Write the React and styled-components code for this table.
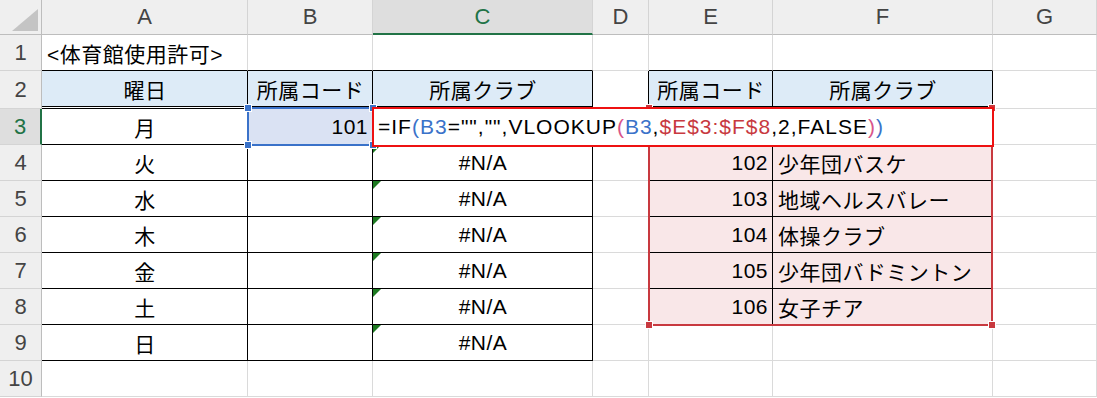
import React from 'react';
import styled, { createGlobalStyle } from 'styled-components';

const Global = createGlobalStyle`
  html, body { margin: 0; padding: 0; background: #fff; }
  body { font-family: "Liberation Sans", "Noto Sans CJK JP", sans-serif; }
`;

const GRID = '#DADADA';
const BLACK = '#000';

const Sheet = styled.div`
  display: grid;
  grid-template-columns: 42px 206px 125px 220px 56px 124px 220px 104px;
  grid-template-rows: 35px 36px 38px repeat(8, 36px);
  width: 1097px;
  height: 398px;
  overflow: hidden;
  background: #fff;
  font-family: "Liberation Sans", "Noto Sans CJK JP", sans-serif;
`;

const Corner = styled.div`
  grid-row: 1;
  grid-column: 1;
  background: #efefef;
  border-right: 1px solid #bdbdbd;
  border-bottom: 1px solid #bdbdbd;
  box-sizing: border-box;
  display: flex;
  align-items: flex-end;
  justify-content: flex-end;
  padding: 0 3px 3px 0;
`;

const ColHead = styled.div`
  grid-row: 1;
  grid-column: ${p => p.$c};
  box-sizing: border-box;
  background: ${p => (p.$active ? '#dedede' : '#efefef')};
  border-right: 1px solid #d4d4d4;
  border-bottom: ${p => (p.$active ? '2px solid #217346' : '1px solid #bdbdbd')};
  color: ${p => (p.$active ? '#217346' : '#444')};
  font-size: 22px;
  display: flex;
  align-items: center;
  justify-content: center;
`;

const RowHead = styled.div`
  grid-row: ${p => p.$r};
  grid-column: 1;
  box-sizing: border-box;
  background: ${p => (p.$active ? '#dedede' : '#efefef')};
  border-right: ${p => (p.$active ? '2px solid #217346' : '1px solid #bdbdbd')};
  border-bottom: 1px solid #d4d4d4;
  color: ${p => (p.$active ? '#217346' : '#444')};
  font-size: 22px;
  display: flex;
  align-items: center;
  justify-content: center;
`;

const Cell = styled.div`
  grid-row: ${p => p.$r};
  grid-column: ${p => p.$c};
  box-sizing: border-box;
  position: relative;
  background: ${p => p.$bg || '#fff'};
  border-right: 1px solid ${p => p.$rb || GRID};
  border-bottom: ${p => (p.$bb === 'double' ? '3px double #000' : `1px solid ${p.$bb || GRID}`)};
  display: flex;
  align-items: center;
  justify-content: ${p => (p.$align === 'right' ? 'flex-end' : p.$align === 'center' ? 'center' : 'flex-start')};
  padding: 0 4px 0 5px;
  font-size: 21px;
  letter-spacing: 0.5px;
  color: #000;
  white-space: nowrap;
  overflow: visible;
  z-index: ${p => (p.$front ? 1 : 0)};
  background-clip: padding-box;

  &::before {
    content: '';
    display: ${p => (p.$err ? 'block' : 'none')};
    position: absolute;
    top: 0;
    left: 0;
    width: 0;
    height: 0;
    border-top: 8px solid #1d7a21;
    border-right: 8px solid transparent;
  }
`;

const RefBox = styled.div`
  grid-row: ${p => p.$r};
  grid-column: ${p => p.$c};
  position: relative;
  border: 2px solid ${p => p.$color};
  margin: ${p => p.$m};
  pointer-events: none;
  z-index: ${p => p.$z};
`;

const Handle = styled.span`
  position: absolute;
  width: 6px;
  height: 6px;
  background: ${p => p.$color};
  border: 1px solid #fff;
  ${p => (p.$v === 't' ? 'top: -5px;' : 'bottom: -5px;')}
  ${p => (p.$h === 'l' ? 'left: -5px;' : 'right: -5px;')}
`;

const EditBox = styled.div`
  grid-row: 4;
  grid-column: 4 / 8;
  margin: -2px -1px -2px -1px;
  border: 2px solid #ee1111;
  background: #fff;
  z-index: 3;
  display: flex;
  align-items: center;
  padding-left: 4px;
  font-size: 21px;
  letter-spacing: 1px;
  color: #000;
  white-space: nowrap;
`;

const Tok = styled.span`
  color: ${p => p.$color || '#000'};
`;

const BLUE = '#3a72c9';
const RED = '#c8393f';
const PINK = '#d9558a';
const RANGE_FILL = '#f9e7e8';
const HEAD_FILL = '#ddebf7';

const days = ['月', '火', '水', '木', '金', '土', '日'];
const clubs = [
  ['102', '少年団バスケ'],
  ['103', '地域ヘルスバレー'],
  ['104', '体操クラブ'],
  ['105', '少年団バドミントン'],
  ['106', '女子チア'],
];

function buildCells() {
  const cells = [];
  for (let row = 1; row <= 10; row++) {
    const gr = row + 1;
    for (let col = 0; col < 7; col++) {
      const gc = col + 2;
      const letter = 'ABCDEFG'[col];
      const p = { $r: gr, $c: gc, key: `${letter}${row}` };
      let text = '';
      const inT1 = ['A', 'B', 'C'].includes(letter) && row >= 2 && row <= 9;
      const inT2 = ['E', 'F'].includes(letter) && row >= 2 && row <= 8;
      if (inT1 || inT2) {
        p.$rb = BLACK;
        p.$bb = row === 2 ? 'double' : BLACK;
      }
      if (row === 1 && ['A', 'B', 'C', 'E', 'F'].includes(letter)) p.$bb = BLACK;
      if (letter === 'D' && row >= 2 && row <= 8) p.$rb = BLACK;
      if (row === 2 && (inT1 || inT2)) {
        p.$bg = HEAD_FILL;
        p.$align = 'center';
        text = { A: '曜日', B: '所属コード', C: '所属クラブ', E: '所属コード', F: '所属クラブ' }[letter];
      }
      if (inT2 && row >= 3) p.$bg = RANGE_FILL;
      if (letter === 'A' && row === 1) {
        text = '<体育館使用許可>';
        p.$front = true;
      }
      if (letter === 'A' && row >= 3 && row <= 9) {
        text = days[row - 3];
        p.$align = 'center';
      }
      if (letter === 'B' && row === 3) {
        text = '101';
        p.$align = 'right';
        p.$bg = '#dae2f3';
      }
      if (letter === 'C' && row >= 4 && row <= 9) {
        text = '#N/A';
        p.$align = 'center';
        p.$err = true;
      }
      if (letter === 'E' && row >= 4 && row <= 8) {
        text = clubs[row - 4][0];
        p.$align = 'right';
      }
      if (letter === 'F' && row >= 4 && row <= 8) {
        text = clubs[row - 4][1];
      }
      cells.push(<Cell {...p}>{text}</Cell>);
    }
  }
  return cells;
}

const corners = [
  ['t', 'l'],
  ['t', 'r'],
  ['b', 'l'],
  ['b', 'r'],
];

export default function App() {
  return (
    <>
      <Global />
      <Sheet>
        <Corner>
          <svg width="26" height="22" viewBox="0 0 26 22">
            <polygon points="26,0 26,22 0,22" fill="#c4c4c4" />
          </svg>
        </Corner>
        {['A', 'B', 'C', 'D', 'E', 'F', 'G'].map((l, i) => (
          <ColHead key={l} $c={i + 2} $active={l === 'C'}>
            {l}
          </ColHead>
        ))}
        {Array.from({ length: 10 }, (_, i) => (
          <RowHead key={i} $r={i + 2} $active={i + 1 === 3}>
            {i + 1}
          </RowHead>
        ))}
        {buildCells()}

        <RefBox $r={4} $c={3} $color={BLUE} $m="-2px -1px -1px -1px" $z={2}>
          {corners.map(([v, h]) => (
            <Handle key={v + h} $v={v} $h={h} $color={BLUE} />
          ))}
        </RefBox>

        <RefBox $r="4 / 10" $c="6 / 8" $color={RED} $m="-2px 0 -1px -1px" $z={2}>
          {corners.map(([v, h]) => (
            <Handle key={v + h} $v={v} $h={h} $color={RED} />
          ))}
        </RefBox>

        <EditBox>
          <Tok>=IF</Tok>
          <Tok $color={BLUE}>(</Tok>
          <Tok $color={BLUE}>B3</Tok>
          <Tok>="","",VLOOKUP</Tok>
          <Tok $color={PINK}>(</Tok>
          <Tok $color={BLUE}>B3</Tok>
          <Tok>,</Tok>
          <Tok $color={RED}>$E$3:$F$8</Tok>
          <Tok>,2,FALSE</Tok>
          <Tok $color={PINK}>)</Tok>
          <Tok $color={BLUE}>)</Tok>
        </EditBox>
      </Sheet>
    </>
  );
}
